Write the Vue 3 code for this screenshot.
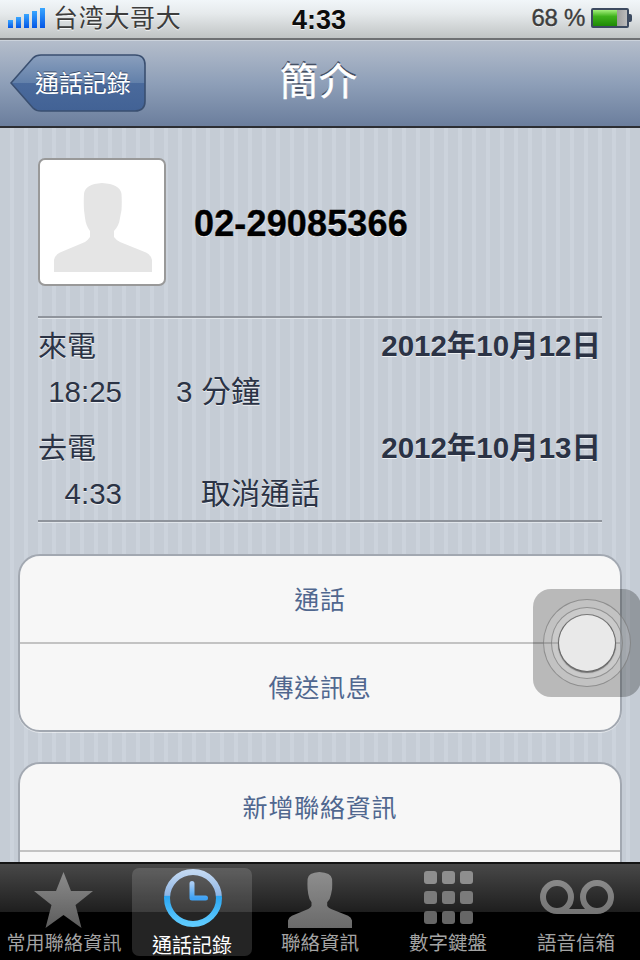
<script setup>
const calls = [
  { kind: '來電', date: '2012年10月12日', time: '18:25', detail: '3 分鐘', cancel: false },
  { kind: '去電', date: '2012年10月13日', time: '4:33', detail: '取消通話', cancel: true },
]
const bars = [8, 11, 14, 17, 20]
const tabs = [
  { label: '常用聯絡資訊', icon: 'star' },
  { label: '通話記錄', icon: 'clock', active: true },
  { label: '聯絡資訊', icon: 'person' },
  { label: '數字鍵盤', icon: 'keypad' },
  { label: '語音信箱', icon: 'voicemail' },
]
const keys = [0, 1, 2, 3, 4, 5, 6, 7, 8]
</script>

<template>
  <div class="phone">
    <header class="status">
      <div class="status-left">
        <div class="signal">
          <span v-for="h in bars" :key="h" class="bar" :style="{ height: h + 'px' }"></span>
        </div>
        <span class="carrier">台湾大哥大</span>
      </div>
      <span class="clock-text">4:33</span>
      <div class="status-right">
        <span class="percent">68 %</span>
        <div class="battery"><div class="battery-fill"></div></div>
        <div class="battery-nub"></div>
      </div>
    </header>

    <nav class="navbar">
      <button class="back">
        <svg class="back-shape" width="136" height="58" viewBox="0 0 136 58">
          <defs>
            <linearGradient id="backFill" x1="0" y1="0" x2="0" y2="1">
              <stop offset="0" stop-color="#8a9fbd" />
              <stop offset="0.5" stop-color="#6280aa" />
              <stop offset="0.5" stop-color="#4a6a9c" />
              <stop offset="1" stop-color="#426295" />
            </linearGradient>
          </defs>
          <path d="M1 29 L23 4 Q26 1 31 1 H125 Q135 1 135 11 V47 Q135 57 125 57 H31 Q26 57 23 54 Z" fill="url(#backFill)" stroke="#3a4f70" stroke-width="1.6" />
        </svg>
        <span class="back-label">通話記錄</span>
      </button>
      <h1 class="title">簡介</h1>
    </nav>

    <main class="content">
      <section class="profile">
        <div class="head">
          <div class="avatar">
            <svg width="124" height="124" viewBox="0 0 124 124">
              <path d="M14 112 V100 Q15 95 20 92.5 L45 82 Q48 80 50 77 L50 71 Q46 66 45 58 L44 50 Q43.5 42 44 34 Q45 24 62 23 Q80 24 81.5 34 Q82 42 81.5 50 L80 58 Q79 66 74 71 L74 77 Q76 80 80 82 L106 92.5 Q111 95 112 100 V112 Z" fill="#e5e5e5" />
            </svg>
          </div>
          <div class="number">02-29085366</div>
        </div>
        <div class="calls">
          <div v-for="c in calls" :key="c.kind" class="call">
            <div class="call-line">
              <span class="kind">{{ c.kind }}</span>
              <strong class="date">{{ c.date }}</strong>
            </div>
            <div class="call-line detail-line">
              <span class="time">{{ c.time }}</span>
              <span class="detail" :class="{ cancel: c.cancel }">{{ c.detail }}</span>
            </div>
          </div>
        </div>
      </section>

      <section class="card first">
        <div class="row">通話</div>
        <div class="row">傳送訊息</div>
      </section>
      <section class="card">
        <div class="row">新增聯絡資訊</div>
        <div class="row"></div>
      </section>
    </main>

    <footer class="tabbar">
      <div v-for="t in tabs" :key="t.label" class="tab" :class="{ active: t.active }">
        <div class="tab-icon">
          <svg v-if="t.icon === 'star'" class="icon-star" width="60" height="58" viewBox="0 0 60 58">
            <defs>
              <linearGradient id="g1" x1="0" y1="0" x2="0" y2="1">
                <stop offset="0" stop-color="#8c8c8c" /><stop offset="1" stop-color="#5c5c5c" />
              </linearGradient>
            </defs>
            <path d="M29.5 1 L37 20 H59 L41.5 34 L47.5 57 L29.5 44 L11.5 57 L17.5 34 L0 20 H22 Z" fill="url(#g1)" />
          </svg>
          <svg v-else-if="t.icon === 'clock'" class="icon-clock" width="60" height="60" viewBox="0 0 60 60">
            <defs>
              <linearGradient id="g2" x1="0" y1="0" x2="0" y2="1">
                <stop offset="0" stop-color="#c2d8f2" /><stop offset="0.45" stop-color="#8fb5e4" />
                <stop offset="0.46" stop-color="#2ba6f2" /><stop offset="1" stop-color="#5ecbff" />
              </linearGradient>
              <linearGradient id="g3" x1="0" y1="0" x2="0" y2="1">
                <stop offset="0" stop-color="#a8ccf4" /><stop offset="1" stop-color="#3fa2f4" />
              </linearGradient>
            </defs>
            <circle cx="30" cy="30" r="26" fill="none" stroke="url(#g2)" stroke-width="6" />
            <path d="M29 15.5 V30 H42.5" fill="none" stroke="url(#g3)" stroke-width="5" stroke-linecap="round" stroke-linejoin="round" />
          </svg>
          <svg v-else-if="t.icon === 'person'" class="icon-person" width="64" height="56" viewBox="14 23 98 89" preserveAspectRatio="none">
            <defs>
              <linearGradient id="g4" x1="0" y1="0" x2="0" y2="1">
                <stop offset="0" stop-color="#8e8e8e" /><stop offset="1" stop-color="#6a6a6a" />
              </linearGradient>
            </defs>
            <path d="M14 112 V100 Q15 95 20 92.5 L45 82 Q48 80 50 77 L50 71 Q46 66 45 58 L44 50 Q43.5 42 44 34 Q45 24 62 23 Q80 24 81.5 34 Q82 42 81.5 50 L80 58 Q79 66 74 71 L74 77 Q76 80 80 82 L106 92.5 Q111 95 112 100 V112 Z" fill="url(#g4)" />
          </svg>
          <div v-else-if="t.icon === 'keypad'" class="keypad">
            <span v-for="k in keys" :key="k" class="key" :class="'key-row-' + Math.floor(k / 3)"></span>
          </div>
          <svg v-else class="icon-vm" width="74" height="34" viewBox="0 0 74 34">
            <defs>
              <linearGradient id="g5" gradientUnits="userSpaceOnUse" x1="0" y1="0" x2="0" y2="34">
                <stop offset="0" stop-color="#8a8a8a" /><stop offset="1" stop-color="#747474" />
              </linearGradient>
            </defs>
            <circle cx="17" cy="17" r="14" fill="none" stroke="url(#g5)" stroke-width="6" />
            <circle cx="57" cy="17" r="14" fill="none" stroke="url(#g5)" stroke-width="6" />
            <rect x="17" y="29" width="40" height="5" fill="url(#g5)" />
          </svg>
        </div>
        <span class="tab-label">{{ t.label }}</span>
      </div>
    </footer>

    <div class="assistive">
      <div class="ring outer"><div class="ring middle"><div class="disc"></div></div></div>
    </div>
  </div>
</template>

<style scoped>
.phone {
  position: relative;
  width: 640px;
  height: 960px;
  overflow: hidden;
  display: flex;
  flex-direction: column;
  font-family: "Liberation Sans", "Noto Sans CJK TC", sans-serif;
}
.status {
  position: relative;
  height: 40px;
  box-sizing: border-box;
  flex: none;
  display: flex;
  align-items: center;
  justify-content: space-between;
  padding: 0 8px 2px;
  background: linear-gradient(#f1f6f9, #e6eaec 35%, #c0c4c4);
  border-bottom: 2px solid #6f7173;
  color: #3d3d3d;
  text-shadow: 0 1px 0 rgba(255, 255, 255, 0.8);
}
.status-left, .status-right { display: flex; align-items: center; }
.signal { display: flex; align-items: flex-end; gap: 3px; height: 20px; margin-right: 8px; }
.bar { width: 5px; background: linear-gradient(#38a6ff, #0456e6); }
.carrier { font-size: 25px; letter-spacing: 0.7px; line-height: 38px; }
.clock-text {
  position: absolute;
  left: 292px;
  top: 1px;
  font-size: 27px;
  font-weight: 700;
  line-height: 38px;
  color: #0c0c0c;
}
.percent {
  font-size: 24px;
  margin-right: 6px;
  line-height: 38px;
  letter-spacing: -0.3px;
  -webkit-text-stroke: 0.4px #3d3d3d;
}
.battery {
  width: 38px;
  height: 20px;
  box-sizing: border-box;
  border: 2px solid #3c4a60;
  border-radius: 2px;
  background: linear-gradient(90deg, #555, #bbb);
  overflow: hidden;
}
.battery-fill { width: 24px; height: 100%; background: linear-gradient(#a4f07c, #3fb21c 40%, #1f8a06); }
.battery-nub { width: 3px; height: 8px; background: #3c4a60; border-radius: 0 2px 2px 0; }
.navbar {
  position: relative;
  height: 88px;
  box-sizing: border-box;
  flex: none;
  display: flex;
  align-items: center;
  justify-content: center;
  border-top: 1px solid #ccd3dc;
  border-bottom: 2px solid #2c2e33;
  background: linear-gradient(#b4bdcb, #8e9fb8 50%, #6b7e9d);
}
.back {
  position: absolute;
  left: 10px;
  top: 13px;
  width: 136px;
  height: 58px;
  padding: 0 0 3px 25px;
  border: 0;
  background: none;
  font: inherit;
  display: flex;
  align-items: center;
}
.back-shape { position: absolute; left: 0; top: 0; }
.back-label {
  position: relative;
  font-size: 24px;
  color: #fff;
  letter-spacing: -0.1px;
  text-shadow: 0 -1px 0 rgba(30, 45, 70, 0.7);
}
.title {
  margin: 0 2px 4px 0;
  font-size: 38px;
  font-weight: 400;
  line-height: 1;
  color: #fff;
  letter-spacing: 1px;
  -webkit-text-stroke: 0.5px #fff;
  text-shadow: 0 -2px 0 rgba(40, 50, 70, 0.75);
}
.content {
  flex: 1;
  min-height: 0;
  overflow: hidden;
  padding-top: 30px;
  background: repeating-linear-gradient(90deg, #c5ccd5 0, #c5ccd5 10px, #ccd3dc 10px, #ccd3dc 14px);
}
.profile { padding: 0 38px; }
.head { display: flex; align-items: center; gap: 28px; padding-bottom: 30px; }
.avatar {
  width: 128px;
  height: 128px;
  box-sizing: border-box;
  border: 2px solid #999;
  border-radius: 7px;
  background: #fff;
  display: flex;
}
.number {
  font-size: 36px;
  font-weight: 700;
  color: #000;
  margin-top: 4px;
  letter-spacing: 0.15px;
  -webkit-text-stroke: 0.4px #000;
  text-shadow: 0 1px 0 #fff;
}
.calls {
  border-top: 2px solid #8f949c;
  border-bottom: 2px solid #8f949c;
  box-shadow: 0 1px 0 #e0e5ea, inset 0 1px 0 #e0e5ea;
  padding: 5px 0 3px;
}
.call + .call { margin-top: 10px; }
.call-line {
  display: flex;
  justify-content: space-between;
  height: 46px;
  line-height: 46px;
  font-size: 28px;
  color: #2b3345;
  text-shadow: 0 1px 0 rgba(255, 255, 255, 0.7);
}
.kind { font-size: 29px; position: relative; top: 1px; }
.date { font-size: 29.5px; font-weight: 700; margin-right: 1px; }
.detail-line { justify-content: flex-start; font-size: 29.5px; }
.time { width: 84px; text-align: right; }
.detail { margin-left: 54px; letter-spacing: 0.3px; }
.detail.cancel { margin-left: 79px; }
.card {
  margin: 30px 18px 0;
  background: #f7f7f7;
  border: 2px solid #a2a8b1;
  border-radius: 22px;
  box-shadow: 0 1px 0 rgba(255, 255, 255, 0.5);
}
.card.first { margin-top: 32px; }
.row {
  height: 86px;
  box-sizing: border-box;
  padding-bottom: 2px;
  display: flex;
  align-items: center;
  justify-content: center;
  font-size: 25px;
  letter-spacing: 0.8px;
  color: #50678f;
}
.row + .row { height: 88px; border-top: 2px solid #c3c3c3; }
.tabbar {
  flex: none;
  height: 98px;
  box-sizing: border-box;
  display: flex;
  border-top: 2px solid #141414;
  background: linear-gradient(#484848, #1e1e1e 48px, #000 48px);
}
.tab {
  width: 128px;
  height: 88px;
  margin-top: 4px;
  display: flex;
  flex-direction: column;
  align-items: center;
  position: relative;
}
.tab.active::before {
  content: "";
  position: absolute;
  top: 0;
  left: 4px;
  right: 4px;
  height: 88px;
  border-radius: 7px;
  background: rgba(255, 255, 255, 0.14);
}
.tab-icon {
  position: relative;
  height: 67px;
  padding-bottom: 2px;
  box-sizing: border-box;
  display: flex;
  align-items: center;
  justify-content: center;
}
.icon-star { margin-top: 3px; }
.icon-clock { margin: 0 0 3px 1px; }
.icon-person { margin-top: 3px; }
.icon-vm { margin: 0 0 3px 1px; }
.tab-label {
  position: relative;
  font-size: 19.5px;
  line-height: 26px;
  color: #a3a3a3;
  white-space: nowrap;
}
.tab:first-child .tab-label { font-size: 19px; letter-spacing: 0.2px; }
.tab.active .tab-label { color: #fff; font-size: 20px; }
.keypad { display: grid; grid-template-columns: repeat(3, 13px); gap: 7px 5px; margin-bottom: 2px; }
.key { height: 13px; border-radius: 3px; }
.key-row-0 { background: #8e8e8e; }
.key-row-1 { background: #7b7b7b; }
.key-row-2 { background: #666; }
.assistive {
  position: absolute;
  left: 533px;
  top: 589px;
  width: 108px;
  height: 108px;
  border-radius: 18px;
  background: rgba(0, 0, 0, 0.25);
  display: flex;
  align-items: center;
  justify-content: center;
}
.ring { border-radius: 50%; display: flex; align-items: center; justify-content: center; }
.outer {
  width: 88px;
  height: 88px;
  box-sizing: border-box;
  border: 1px solid rgba(120, 120, 120, 0.7);
  background: rgba(255, 255, 255, 0.14);
}
.middle {
  width: 72px;
  height: 72px;
  box-sizing: border-box;
  border: 1px solid rgba(120, 120, 120, 0.7);
  background: rgba(255, 255, 255, 0.14);
}
.disc {
  width: 58px;
  height: 58px;
  box-sizing: border-box;
  border-radius: 50%;
  background: #e9e9e9;
  border: 1px solid #666;
  border-top-color: #777;
  box-shadow: 0 1px 1px rgba(60, 60, 60, 0.6);
}
</style>
